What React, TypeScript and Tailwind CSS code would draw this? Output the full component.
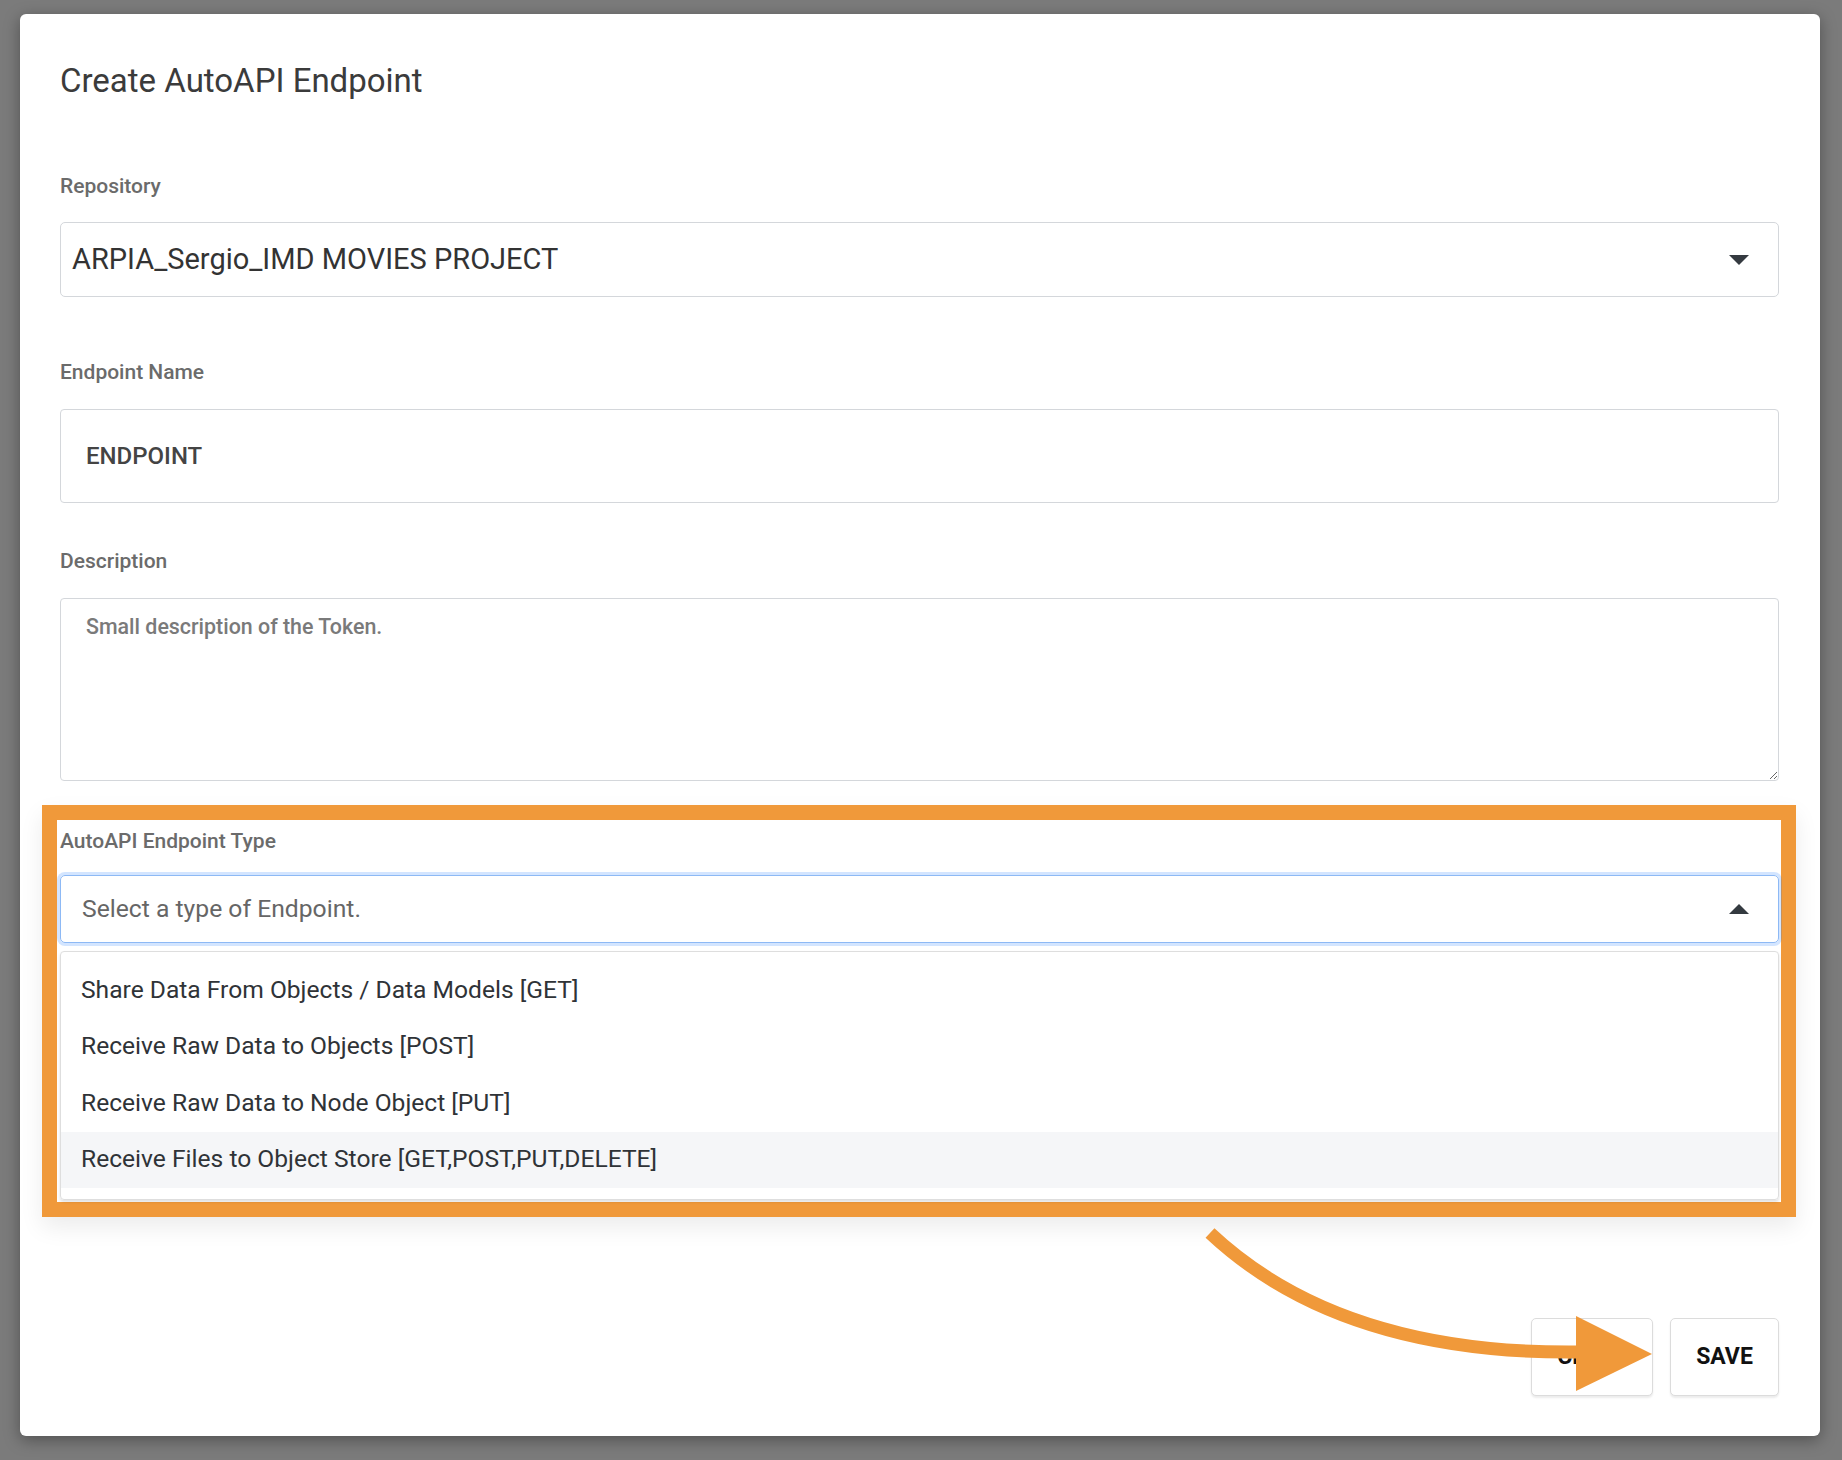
import React from "react";

const items = [
  "Share Data From Objects / Data Models [GET]",
  "Receive Raw Data to Objects [POST]",
  "Receive Raw Data to Node Object [PUT]",
  "Receive Files to Object Store [GET,POST,PUT,DELETE]",
];

function Caret({ up = false }: { up?: boolean }) {
  return (
    <svg width="20" height="10" viewBox="0 0 20 10" className="shrink-0">
      {up ? <polygon points="0,10 20,10 10,0" fill="#343a40" /> : <polygon points="0,0 20,0 10,10" fill="#343a40" />}
    </svg>
  );
}

export default function App() {
  return (
    <div className="relative w-[1842px] h-[1460px] overflow-hidden bg-[#7b7b7b] pt-[14px] pl-[20px] font-['Roboto','Liberation_Sans',sans-serif]">
      <div className="w-[1800px] h-[1422px] bg-white rounded-[6px] shadow-[0_4px_16px_rgba(0,0,0,0.35)] pt-[47px] pl-[40px] pr-[41px]">
        <h1 className="text-[33px] leading-[40px] text-[#3b3b3b]">Create AutoAPI Endpoint</h1>

        {/* Repository */}
        <div className="mt-[73px] text-[21px] leading-[24px] font-medium text-[#6b6b6b]">Repository</div>
        <div className="mt-[24px] h-[75px] border border-[#d4d7db] rounded-[5px] flex items-center justify-between pl-[11px] pr-[29px]">
          <span className="text-[29px] text-[#333]">ARPIA_Sergio_IMD MOVIES PROJECT</span>
          <Caret />
        </div>

        {/* Endpoint name */}
        <div className="mt-[63px] text-[21px] leading-[24px] font-medium text-[#6b6b6b]">Endpoint Name</div>
        <input
          readOnly
          defaultValue="ENDPOINT"
          className="mt-[25px] block w-full h-[94px] border border-[#d4d7db] rounded-[4px] pl-[25px] text-[24px] font-medium text-[#444] outline-none"
        />

        {/* Description */}
        <div className="mt-[46px] text-[21px] leading-[24px] font-medium text-[#6b6b6b]">Description</div>
        <textarea
          placeholder="Small description of the Token."
          className="mt-[25px] block w-full h-[183px] border border-[#d4d7db] rounded-[4px] pl-[25px] pt-[14px] text-[21.4px] leading-[28px] font-medium text-[#444] placeholder:text-[#7a7a7a] outline-none"
        />

        {/* Highlighted endpoint type */}
        <div className="mt-[24px] -ml-[18px] -mr-[17px] border-[15px] border-[#f0993a] bg-white pl-[3px] pr-[2px] pt-[9px] pb-[2px] shadow-[0_10px_22px_rgba(0,0,0,0.08)]">
          <div className="text-[21px] leading-[24px] font-medium text-[#6b6b6b]">AutoAPI Endpoint Type</div>
          <div className="mt-[22px] h-[68px] border border-[#8db9f5] rounded-[5px] shadow-[0_0_0_3px_rgba(13,110,253,0.18)] flex items-center justify-between pl-[21px] pr-[29px]">
            <span className="text-[24.7px] text-[#666]">Select a type of Endpoint.</span>
            <Caret up />
          </div>
          <div className="mt-[8px] border border-[#dedede] rounded-[4px] shadow-[0_2px_3px_rgba(0,0,0,0.12)] pt-[10px] pb-[11px]">
            {items.map((it, i) => (
              <div
                key={it}
                className={
                  "h-[56.5px] flex items-center pl-[20px] text-[24.6px] text-[#2f3337] " +
                  (i === 3 ? "bg-[#f5f6f8]" : "")
                }
              >
                {it}
              </div>
            ))}
          </div>
        </div>

        {/* Footer buttons */}
        <div className="mt-[101px] flex justify-end gap-[17px]">
          <button className="w-[122px] h-[78px] border border-[#dcdcdc] rounded-[5px] bg-white shadow-[0_2px_2px_rgba(0,0,0,0.08)] text-[23px] font-bold text-[#111]">
            CLOSE
          </button>
          <button className="w-[109px] h-[78px] border border-[#dcdcdc] rounded-[5px] bg-white shadow-[0_2px_2px_rgba(0,0,0,0.08)] text-[23px] font-bold text-[#111]">
            SAVE
          </button>
        </div>
      </div>

      {/* Annotation arrow */}
      <svg className="absolute inset-0 pointer-events-none" width="1842" height="1460" viewBox="0 0 1842 1460">
        <path d="M1210,1233 Q1340,1355 1580,1352" fill="none" stroke="#f0993a" strokeWidth="13" />
        <polygon points="1576,1316 1576,1391 1652,1354" fill="#f0993a" />
      </svg>
    </div>
  );
}
